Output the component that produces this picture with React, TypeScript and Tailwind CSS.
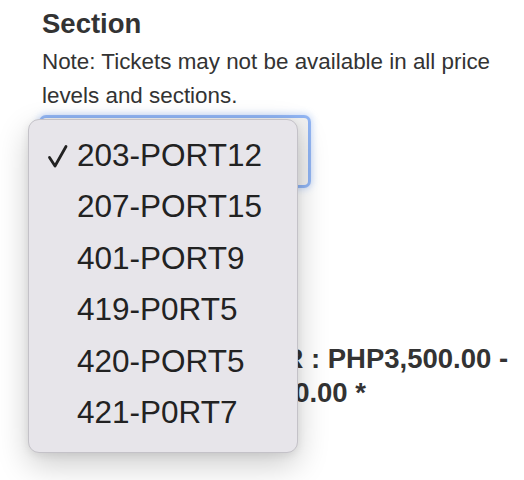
import { useState } from "react";

const sections = [
  "203-PORT12",
  "207-PORT15",
  "401-PORT9",
  "419-P0RT5",
  "420-PORT5",
  "421-P0RT7",
];

function CheckMark() {
  return (
    <svg width="22" height="26" viewBox="0 0 22 26" className="shrink-0">
      <path
        d="M3.5 14.5 L9 23 L20 3.5"
        fill="none"
        stroke="#222"
        strokeWidth="2.8"
        strokeLinecap="round"
        strokeLinejoin="round"
      />
    </svg>
  );
}

export default function App() {
  const [selected] = useState("203-PORT12");

  return (
    <div className="relative w-[524px] h-[480px] overflow-hidden bg-white font-['Liberation_Sans',Arial,sans-serif] text-[#333]">
      <div className="pl-[42px] pr-[10px] pt-[7px]">
        <h2 className="text-[27.5px] font-bold leading-[34px]">Section</h2>
        <p className="mt-[4px] text-[22.4px] leading-[34px]">
          Note: Tickets may not be available in all price levels and sections.
        </p>
        <div className="mt-[5px] h-[67px] w-[266px] rounded-[4px] bg-[#f1f1f1] shadow-[0_0_0_3px_rgba(96,148,238,0.6),0_0_7px_4px_rgba(96,148,238,0.35)]" />
        <p className="mt-[157px] whitespace-nowrap text-[27.5px] font-bold leading-[34px]">
          PRICE PER OWNER : PHP3,500.00 -
          <br />
          MAXIMUM PHP5,000.00 *
        </p>
      </div>

      {/* open select menu */}
      <div className="absolute left-[28px] top-[119px] w-[270px] rounded-[11px] border border-[#c4c2c8] bg-[#e7e5ea] pt-[10px] pb-[14px] shadow-[0_12px_32px_rgba(0,0,0,0.2),0_2px_8px_rgba(0,0,0,0.08)]">
        {sections.map((s) => (
          <div
            key={s}
            className="flex h-[51.4px] items-center text-[31.5px] text-[#222]"
          >
            <div className="flex w-[48px] justify-end pr-[9px]">
              {s === selected && <CheckMark />}
            </div>
            <span className="leading-none">{s}</span>
          </div>
        ))}
      </div>
    </div>
  );
}
